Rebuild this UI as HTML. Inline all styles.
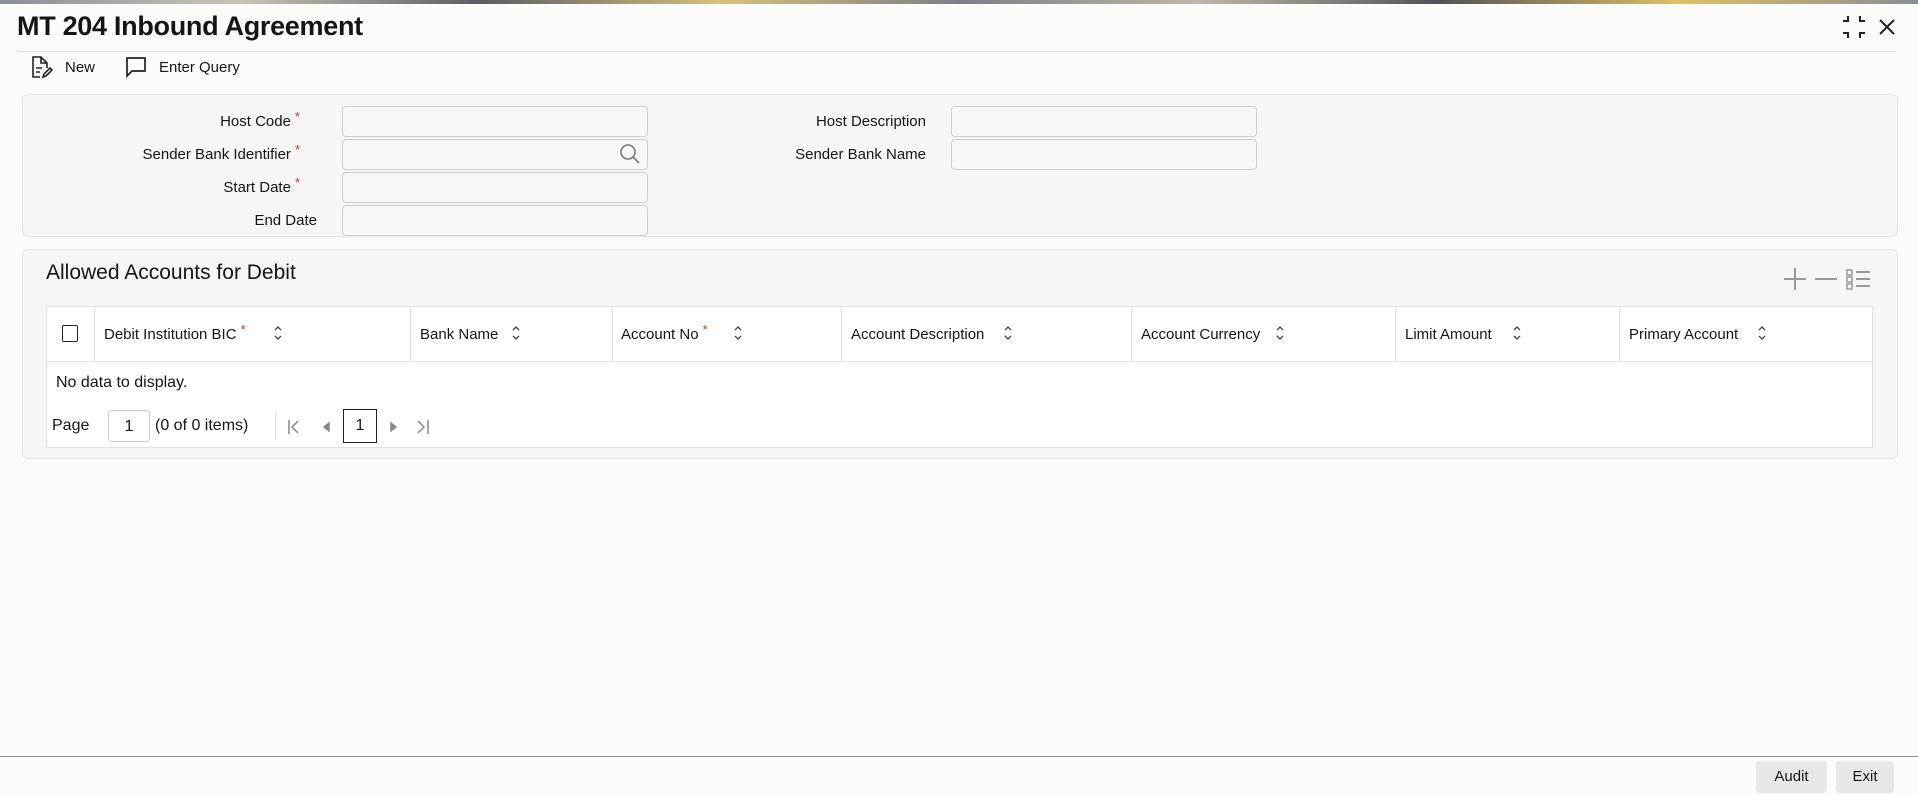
<!DOCTYPE html>
<html><head><meta charset="utf-8"><style>
*{box-sizing:border-box;margin:0;padding:0}
body{width:1918px;height:794px;overflow:hidden;background:#fbfbfa;font-family:"Liberation Sans",sans-serif;color:#161513;position:relative}
.a{position:absolute}
.strip{left:0;top:0;width:1918px;height:4px;background:linear-gradient(90deg,#8a8f96,#c9c4b8,#5a5d62,#d6c27a,#7b7f85,#bfb8a8,#4f5358,#e0c060,#8a8f96)}
.title{left:17px;top:11px;font-size:27px;font-weight:bold;letter-spacing:-0.3px}
.hr{left:17px;top:51px;width:1879px;height:1px;background:#dcdad6}
.tb{font-size:15px;top:59px}
.panel{background:#f7f6f4;border:1px solid #e6e4e0;border-radius:6px}
.lbl{font-size:15px;text-align:right;width:300px}
.star{color:#b43d3d;font-size:13px;position:relative;top:-5px;margin-left:4px}
.inp{width:306px;height:31px;border:1px solid #cfcdc9;border-radius:4px;background:#f8f7f5}
.th{font-size:15px;top:326px}
.col{top:306px;width:1px;height:55px;background:#e3e1dd}
.btn{top:761px;height:32px;background:#e8e7e5;border-radius:4px;font-size:15px;text-align:center;line-height:32px}
</style></head><body>
<div class="a strip"></div>
<div class="a title">MT 204 Inbound Agreement</div>
<svg class="a" style="left:1842px;top:15px" width="24" height="24" viewBox="0 0 24 24" fill="none" stroke="#222" stroke-width="2"><path d="M1 6h5V1M18 1v5h5M1 18h5v5M23 18h-5v5"/></svg>
<svg class="a" style="left:1878px;top:18px" width="18" height="18" viewBox="0 0 18 18" stroke="#222" stroke-width="2"><path d="M2 2l14 14M16 2L2 16"/></svg>
<div class="a hr"></div>
<svg class="a" style="left:31px;top:55px" width="22" height="24" viewBox="0 0 22 24" fill="none" stroke="#222" stroke-width="1.6"><path d="M9 22H2V2h8l6 6v5M10 2v6h6M5 13h6M5 17h4"/><path d="M12 22l1-3 6-6 2 2-6 6z"/></svg>
<div class="a tb" style="left:65px">New</div>
<svg class="a" style="left:125px;top:56px" width="22" height="22" viewBox="0 0 22 22" fill="none" stroke="#222" stroke-width="1.7"><path d="M2 2h18v13H7l-5 5z"/></svg>
<div class="a tb" style="left:159px">Enter Query</div>

<div class="a panel" style="left:22px;top:94px;width:1876px;height:143px"></div>
<div class="a lbl" style="left:0;top:113px">Host Code<span class="star">*</span></div>
<div class="a lbl" style="left:0;top:146px">Sender Bank Identifier<span class="star">*</span></div>
<div class="a lbl" style="left:0;top:179px">Start Date<span class="star">*</span></div>
<div class="a lbl" style="left:17px;top:212px">End Date</div>
<div class="a inp" style="left:342px;top:106px"></div>
<div class="a inp" style="left:342px;top:139px"></div>
<svg class="a" style="left:619px;top:143px" width="22" height="22" viewBox="0 0 22 22" fill="none" stroke="#777" stroke-width="1.6"><circle cx="9" cy="9" r="7"/><path d="M14 14l6 6"/></svg>
<div class="a inp" style="left:342px;top:172px"></div>
<div class="a inp" style="left:342px;top:205px"></div>
<div class="a lbl" style="left:626px;top:113px">Host Description</div>
<div class="a lbl" style="left:626px;top:146px">Sender Bank Name</div>
<div class="a inp" style="left:951px;top:106px"></div>
<div class="a inp" style="left:951px;top:139px"></div>

<div class="a panel" style="left:22px;top:249px;width:1876px;height:210px"></div>
<div class="a" style="left:46px;top:261px;font-size:21px">Allowed Accounts for Debit</div>
<svg class="a" style="left:1780px;top:266px" width="95" height="26" viewBox="0 0 95 26" fill="none" stroke="#999" stroke-width="2"><path d="M4 13h22M15 2v22M35 13h22"/><path d="M67 4h5v5h-5zM67 11h5v5h-5zM67 18h5v5h-5z" stroke-width="1.5"/><path d="M76 6h14M76 13h14M76 20h14"/></svg>
<div class="a" style="left:46px;top:306px;width:1827px;height:142px;background:#fff;border:1px solid #e3e1dd"></div>
<div class="a" style="left:46px;top:361px;width:1827px;height:1px;background:#e3e1dd"></div>
<div class="a" style="left:62px;top:325px;width:16px;height:17px;border:1.6px solid #222;border-radius:2px"></div>
<div class="a col" style="left:94px"></div><div class="a col" style="left:410px"></div><div class="a col" style="left:612px"></div><div class="a col" style="left:841px"></div><div class="a col" style="left:1131px"></div><div class="a col" style="left:1395px"></div><div class="a col" style="left:1619px"></div>
<div class="a th" style="left:104px">Debit Institution BIC<span class="star">*</span></div>
<div class="a th" style="left:420px">Bank Name</div>
<div class="a th" style="left:621px">Account No<span class="star">*</span></div>
<div class="a th" style="left:851px">Account Description</div>
<div class="a th" style="left:1141px">Account Currency</div>
<div class="a th" style="left:1405px">Limit Amount</div>
<div class="a th" style="left:1629px">Primary Account</div>
<svg class="a" style="left:0;top:324px" width="1918" height="18" fill="none" stroke="#444" stroke-width="1.3">
<path d="M275 6l3-3 3 3M275 12l3 3 3-3"/>
<path d="M513 6l3-3 3 3M513 12l3 3 3-3"/>
<path d="M735 6l3-3 3 3M735 12l3 3 3-3"/>
<path d="M1005 6l3-3 3 3M1005 12l3 3 3-3"/>
<path d="M1277 6l3-3 3 3M1277 12l3 3 3-3"/>
<path d="M1514 6l3-3 3 3M1514 12l3 3 3-3"/>
<path d="M1759 6l3-3 3 3M1759 12l3 3 3-3"/>
</svg>
<div class="a" style="left:56px;top:374px;font-size:16px">No data to display.</div>
<div class="a" style="left:52px;top:417px;font-size:16px">Page</div>
<div class="a" style="left:108px;top:410px;width:42px;height:32px;border:1px solid #cfcdc9;border-radius:4px;font-size:16px;text-align:center;line-height:31px">1</div>
<div class="a" style="left:155px;top:417px;font-size:16px">(0 of 0 items)</div>
<div class="a" style="left:275px;top:412px;width:1px;height:28px;background:#e0ded9"></div>
<svg class="a" style="left:285px;top:417px" width="150" height="20" fill="none" stroke="#888" stroke-width="1.5"><path d="M4 3v14M13 4l-6 6 6 6"/><path d="M44 6l-5 4 5 4z" fill="#888"/><path d="M106 6l5 4-5 4z" fill="#888"/><path d="M133 4l6 6-6 6M143 3v14"/></svg>
<div class="a" style="left:343px;top:409px;width:34px;height:34px;border:1.3px solid #222;font-size:16px;text-align:center;line-height:32px">1</div>

<div class="a" style="left:0;top:756px;width:1918px;height:1px;background:#888"></div>
<div class="a btn" style="left:1756px;width:71px">Audit</div>
<div class="a btn" style="left:1836px;width:58px">Exit</div>
</body></html>
